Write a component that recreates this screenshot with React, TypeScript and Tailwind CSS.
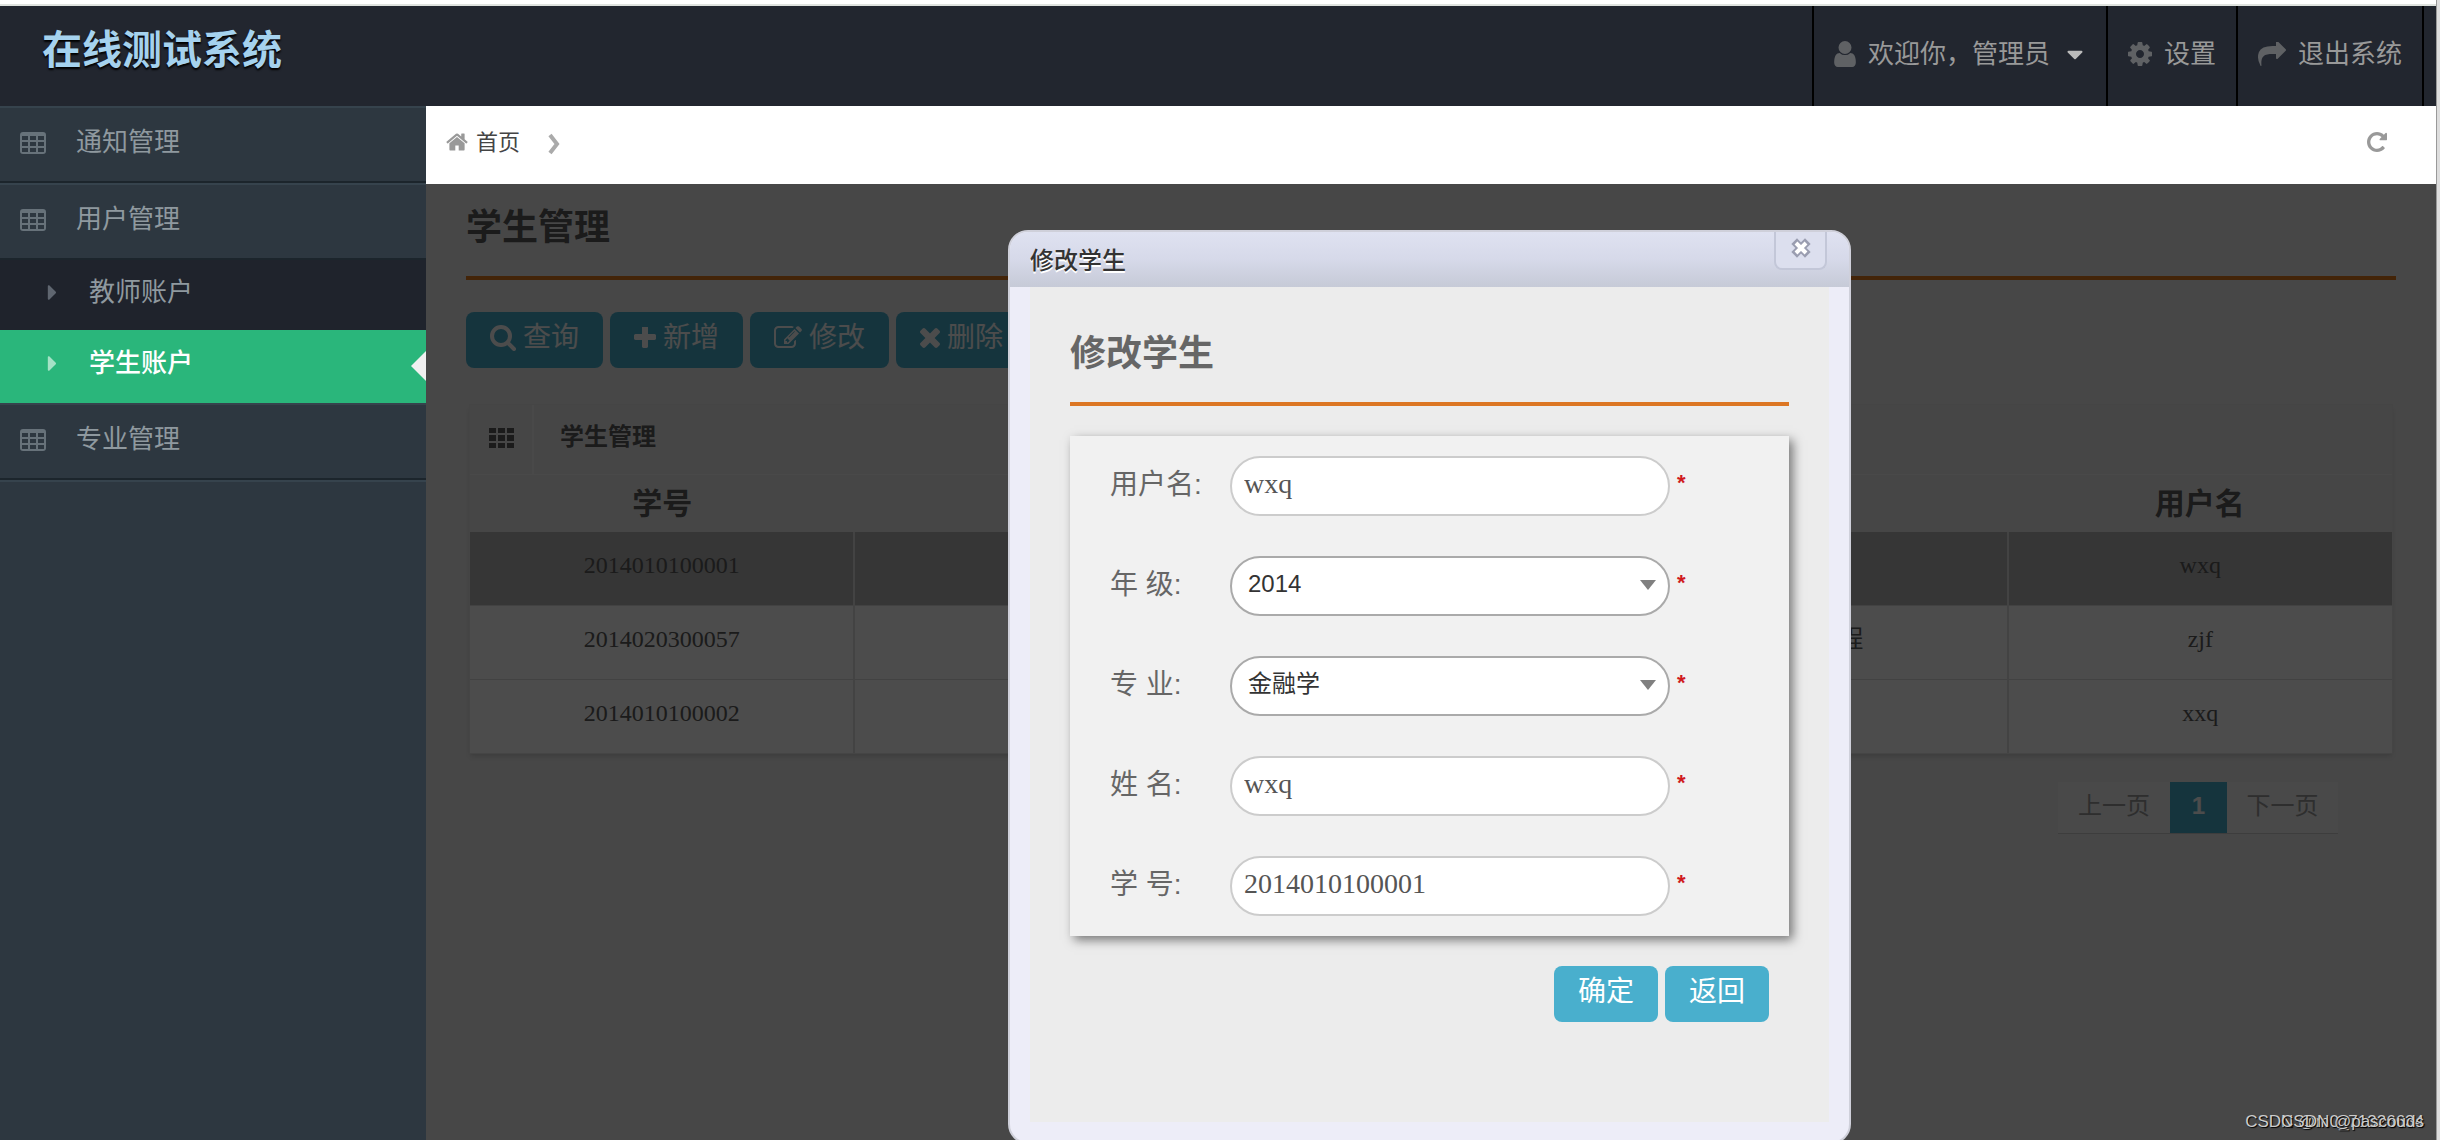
import React from 'react';
import { FaCaretRight, FaCaretDown } from 'react-icons/fa';

type IconProps = { className?: string };

const UserIcon = ({ className }: IconProps) => (
  <svg viewBox="256 128 1280 1536" fill="currentColor" className={className}>
    <path d="M1536 1399q0 109-62.5 187t-150.5 78h-854q-88 0-150.5-78t-62.5-187q0-85 8.5-160.5t31.5-152 58.5-131 94-89 134.5-34.5q131 128 313 128t313-128q76 0 134.5 34.5t94 89 58.5 131 31.5 152 8.5 160.5zm-256-887q0 159-112.5 271.5t-271.5 112.5-271.5-112.5-112.5-271.5 112.5-271.5 271.5-112.5 271.5 112.5 112.5 271.5z" />
  </svg>
);

const CogIcon = ({ className }: IconProps) => (
  <svg viewBox="128 128 1536 1536" fill="currentColor" className={className}>
    <path d="M1152 896q0-106-75-181t-181-75-181 75-75 181 75 181 181 75 181-75 75-181zm512-109v222q0 12-8 23t-20 13l-185 28q-19 54-39 91 35 50 107 138 10 12 10 25t-9 23q-27 37-99 108t-94 71q-12 0-26-9l-138-108q-44 23-91 38-16 136-29 186-7 28-36 28h-222q-14 0-24.5-8.5t-11.5-21.5l-28-184q-49-16-90-37l-141 107q-10 9-25 9-14 0-25-11-126-114-165-168-7-10-7-23 0-12 8-23 15-21 51-66.5t54-70.5q-27-50-41-99l-183-27q-13-2-21-12.5t-8-23.5v-222q0-12 8-23t19-13l186-28q14-46 39-92-40-57-107-138-10-12-10-24 0-10 9-23 26-36 98.5-107.5t94.5-71.5q13 0 26 10l138 107q44-23 91-38 16-136 29-186 7-28 36-28h222q14 0 24.5 8.5t11.5 21.5l28 184q49 16 90 37l142-107q9-9 24-9 13 0 25 10 129 119 165 170 7 8 7 22 0 12-8 23-15 21-51 66.5t-54 70.5q26 50 41 98l183 28q13 2 21 12.5t8 23.5z" />
  </svg>
);

const ShareIcon = ({ className }: IconProps) => (
  <svg viewBox="0 128 1792 1536" fill="currentColor" className={className}>
    <path d="M1792 640q0 26-19 45l-512 512q-19 19-45 19t-45-19-19-45v-256h-224q-98 0-175.5 6t-154 21.5-133 42.5-105.5 69.5-80 101-48.5 138.5-17.5 181q0 55 5 123 0 6 2.5 23.5t2.5 26.5q0 15-8.5 25t-23.5 10q-16 0-28-17-7-9-13-22t-13.5-30-10.5-24q-127-285-127-451 0-199 53-333 162-403 875-403h224v-256q0-26 19-45t45-19 45 19l512 512q19 19 19 45z" />
  </svg>
);

const HomeIcon = ({ className }: IconProps) => (
  <svg viewBox="64 256 1664 1280" fill="currentColor" className={className}>
    <path d="M1472 992v480q0 26-19 45t-45 19h-384v-384h-256v384h-384q-26 0-45-19t-19-45v-480q0-1 .5-3t.5-3l575-474 575 474q1 2 1 6zm223-69l-62 74q-8 9-21 11h-3q-13 0-21-7l-692-577-692 577q-12 8-24 7-13-2-21-11l-62-74q-8-10-7-23.5t11-21.5l719-599q32-26 76-26t76 26l244 204v-195q0-14 9-23t23-9h192q14 0 23 9t9 23v408l219 182q10 8 11 21.5t-7 23.5z" />
  </svg>
);

const RepeatIcon = ({ className }: IconProps) => (
  <svg viewBox="128 128 1536 1536" fill="currentColor" className={className}>
    <path d="M1664 256v448q0 26-19 45t-45 19h-448q-42 0-59-40-17-39 14-69l138-138q-148-137-349-137-104 0-198.5 40.5t-163.5 109.5-109.5 163.5-40.5 198.5 40.5 198.5 109.5 163.5 163.5 109.5 198.5 40.5q119 0 225-52t179-147q7-10 23-12 15 0 25 9l137 138q9 8 9.5 20.5t-7.5 22.5q-109 132-264 204.5t-327 72.5q-156 0-298-61t-245-164-164-245-61-298 61-298 164-245 245-164 298-61q147 0 284.5 55.5t244.5 156.5l130-129q29-31 70-14 39 17 39 59z" />
  </svg>
);

const TableIcon = ({ className }: IconProps) => (
  <svg viewBox="0 0 26 22" fill="currentColor" className={className}>
    <path fillRule="evenodd" d="M3 0h20q3 0 3 3v16q0 3-3 3H3q-3 0-3-3V3q0-3 3-3zM2 4v4h6V4zM10 4v4h6V4zM18 4v4h6V4zM2 10v4h6v-4zM10 10v4h6v-4zM18 10v4h6v-4zM2 16v4h6v-4zM10 16v4h6v-4zM18 16v4h6v-4z" />
  </svg>
);

const GridIcon = ({ className }: IconProps) => (
  <svg viewBox="0 0 25 20" fill="currentColor" className={className}>
    <path d="M0 0h7v5H0zM9 0h7v5H9zM18 0h7v5h-7zM0 7h7v6H0zM9 7h7v6H9zM18 7h7v6h-7zM0 15h7v5H0zM9 15h7v5H9zM18 15h7v5h-7z" />
  </svg>
);

const SearchIcon = ({ className }: IconProps) => (
  <svg viewBox="0 0 26 26" fill="none" stroke="currentColor" strokeWidth="4" strokeLinecap="round" className={className}>
    <circle cx="11" cy="11" r="9" />
    <path d="M18 18l6 6" />
  </svg>
);

const PlusIcon = ({ className }: IconProps) => (
  <svg viewBox="192 192 1408 1408" fill="currentColor" className={className}>
    <path d="M1600 736v192q0 40-28 68t-68 28h-416v416q0 40-28 68t-68 28h-192q-40 0-68-28t-28-68v-416h-416q-40 0-68-28t-28-68v-192q0-40 28-68t68-28h416v-416q0-40 28-68t68-28h192q40 0 68 28t28 68v416h416q40 0 68 28t28 68z" />
  </svg>
);

const EditIcon = ({ className }: IconProps) => (
  <svg viewBox="0 128 1792 1536" fill="currentColor" className={className}>
    <path d="M888 1184l116-116-152-152-116 116v56h96v96h56zm440-720q-16-16-33 1l-350 350q-17 17-1 33t33-1l350-350q17-17 1-33zm80 594v190q0 119-84.5 203.5t-203.5 84.5h-832q-119 0-203.5-84.5t-84.5-203.5v-832q0-119 84.5-203.5t203.5-84.5h832q63 0 117 25 15 7 18 23 3 17-9 29l-49 49q-14 14-32 8-23-6-45-6h-832q-66 0-113 47t-47 113v832q0 66 47 113t113 47h832q66 0 113-47t47-113v-126q0-13 9-22l64-64q15-15 35-7t20 29zm-96-738l288 288-672 672h-288v-288zm444 132l-92 92-288-288 92-92q28-28 68-28t68 28l152 152q28 28 28 68t-28 68z" />
  </svg>
);

const TimesIcon = ({ className }: IconProps) => (
  <svg viewBox="302 366 1188 1188" fill="currentColor" className={className}>
    <path d="M1490 1322q0 40-28 68l-136 136q-28 28-68 28t-68-28l-294-294-294 294q-28 28-68 28t-68-28l-136-136q-28-28-28-68t28-68l294-294-294-294q-28-28-28-68t28-68l136-136q28-28 68-28t68 28l294 294 294-294q28-28 68-28t68 28l136 136q28 28 28 68t-28 68l-294 294 294 294q28 28 28 68z" />
  </svg>
);

const students = [
  { no: '2014010100001', grade: '2014', name: 'wxq', major: '金融学', user: 'wxq', selected: true },
  { no: '2014020300057', grade: '2014', name: 'zjf', major: '软件工程', user: 'zjf', selected: false },
  { no: '2014010100002', grade: '2014', name: 'xxq', major: '金融学', user: 'xxq', selected: false },
];

const toolbar = [
  { label: '查询', icon: <SearchIcon className="size-[26px]" /> },
  { label: '新增', icon: <PlusIcon className="size-[22px]" /> },
  { label: '修改', icon: <EditIcon className="h-6 w-7" /> },
  { label: '删除', icon: <TimesIcon className="size-[20px]" /> },
];

const fields = [
  { id: 'username', label: '用户名:', value: 'wxq' },
  { id: 'grade', label: '年 级:', value: '2014', options: ['2014', '2013'] },
  { id: 'major', label: '专 业:', value: '金融学', options: ['金融学', '软件工程'] },
  { id: 'name', label: '姓 名:', value: 'wxq' },
  { id: 'number', label: '学 号:', value: '2014010100001' },
];

const Header = () => (
  <header className="flex h-[100px] shrink-0 justify-between bg-[#22262f]">
    <h1 className="pl-[42px] text-[40px] leading-[88px] font-bold text-[#a5d2ee] [text-shadow:0_2px_2px_#000]">在线测试系统</h1>
    <nav className="flex pr-3 text-[26px] text-[#999]">
      <a href="#user" className="flex w-[294px] items-center border-l-2 border-black pb-1 pl-5">
        <UserIcon className="mr-3 h-[26px] w-[22px] text-[#5f6164]" />
        欢迎你，管理员
        <FaCaretDown className="ml-3 size-[26px] text-[#bbb]" />
      </a>
      <a href="#settings" className="flex w-[130px] items-center border-l-2 border-black pb-1 pl-5">
        <CogIcon className="mr-3 size-6 text-[#5f6164]" />
        设置
      </a>
      <a href="#logout" className="flex w-[188px] items-center border-x-2 border-black pb-1 pl-5">
        <ShareIcon className="mr-3 h-6 w-7 text-[#5f6164]" />
        退出系统
      </a>
    </nav>
  </header>
);

const MenuItem = ({ label }: { label: string }) => (
  <a href="#menu" className="flex h-[77px] items-center border-t-2 border-b-2 border-t-[#36434d] border-b-[#1c252c] pb-1 pl-5 text-[26px] text-[#8f999f]">
    <TableIcon className="mr-[30px] h-[22px] w-[26px] text-[#67727a]" />
    {label}
  </a>
);

const Sidebar = () => (
  <aside className="w-[426px] shrink-0 bg-[#2d3740]">
    <MenuItem label="通知管理" />
    <MenuItem label="用户管理" />
    <a href="#teachers" className="flex h-[70px] items-center bg-[#1f232c] pb-1.5 pl-[40px] text-[26px] text-[#8f999f]">
      <FaCaretRight className="mr-6 size-[25px] text-[#5f6670]" />
      教师账户
    </a>
    <a href="#students" className="relative flex h-[73px] items-center bg-[#2ab67b] pb-1.5 pl-[40px] text-[26px] font-medium text-white">
      <FaCaretRight className="mr-6 size-[25px] text-[#a5e2c6]" />
      学生账户
      <svg viewBox="0 0 15 30" className="absolute top-[21px] right-0 h-[30px] w-[15px]">
        <path d="M15 0v30L0 15z" fill="#f0f0f0" />
      </svg>
    </a>
    <MenuItem label="专业管理" />
    <div className="h-[2px] bg-[#36434d]" />
  </aside>
);

const Breadcrumb = () => (
  <div className="flex h-[78px] shrink-0 items-center justify-between bg-white pr-[49px] pb-1.5 pl-5 text-[#999]">
    <div className="flex items-center">
      <HomeIcon className="mr-2 h-[18px] w-[22px]" />
      <a href="#home" className="text-[22px] text-[#444]">首页</a>
      <svg viewBox="0 0 12 22" className="mt-1 ml-7 h-[22px] w-3" fill="none" stroke="#aaa" strokeWidth="4">
        <path d="M2 2l7 9-7 9" />
      </svg>
    </div>
    <button type="button" aria-label="刷新">
      <RepeatIcon className="size-[20px]" />
    </button>
  </div>
);

const StudentList = () => (
  <main className="px-10 text-[#5a5a5a]">
    <h2 className="h-24 border-b-4 border-[#e07a1c] text-[36px] leading-[88px] font-bold">学生管理</h2>
    <div className="mt-8 flex gap-[7px]">
      {toolbar.map(({ label, icon }) => (
        <button key={label} type="button" className="flex h-14 items-center gap-[7px] rounded-lg bg-[#49afcd] px-6 pb-1 text-[28px] text-white">
          {icon}
          {label}
        </button>
      ))}
    </div>
    <section className="mt-9 mr-[3px] ml-[3px] border border-[#e6e6e6] shadow-md">
      <div className="flex h-[70px] items-center border-b border-[#f4f4f4] bg-[#ebebeb] text-2xl font-bold">
        <span className="flex h-full w-[64px] items-center justify-center border-r-2 border-[#f6f6f6] pb-1">
          <GridIcon className="h-[20px] w-[25px]" />
        </span>
        <h3 className="pb-1.5 pl-[26px]">学生管理</h3>
      </div>
      <table className="w-full table-fixed border-collapse text-center">
        <thead>
          <tr className="h-[57px] bg-[#ececec] text-[30px] leading-9">
            <th>学号</th>
            <th>年级</th>
            <th>姓名</th>
            <th>专业</th>
            <th>用户名</th>
          </tr>
        </thead>
        <tbody className="font-['Liberation_Serif','Noto_Sans_CJK_SC',serif] text-2xl">
          {students.map((s) => (
            <tr key={s.no} className={s.selected ? 'h-[73px] bg-[#b4b4b4]' : 'h-[74px] border-t border-[#ddd] bg-[#fdfdfd]'}>
              <td className="border-r-2 border-[#e2e2e2] pb-1.5">{s.no}</td>
              <td className="border-r-2 border-[#e2e2e2] pb-1.5">{s.grade}</td>
              <td className="border-r-2 border-[#e2e2e2] pb-1.5">{s.name}</td>
              <td className="border-r-2 border-[#e2e2e2] pb-1.5">{s.major}</td>
              <td className="pb-1.5">{s.user}</td>
            </tr>
          ))}
        </tbody>
      </table>
    </section>
    <div className="mt-7 mr-[58px] flex justify-end text-2xl">
      <div className="flex h-[52px] border-b border-[#ccc] bg-[#f4f4f4]">
        <button type="button" className="w-[112px] pb-1 text-[#999]">上一页</button>
        <button type="button" className="w-[57px] bg-[#49afcd] pb-1 font-bold text-white">1</button>
        <button type="button" className="w-[111px] pb-1 text-[#999]">下一页</button>
      </div>
    </div>
  </main>
);

const Field = ({ id, label, value, options }: { id: string; label: string; value: string; options?: string[] }) => (
  <div className="flex h-[60px]">
    <label htmlFor={id} className="w-[120px] text-[28px] leading-[58px] text-[#666]">{label}</label>
    {options ? (
      <div className="relative w-[440px]">
        <select id={id} defaultValue={value} className="h-full w-full appearance-none rounded-full border-2 border-[#aaa] bg-white pb-1 pl-4 text-2xl text-[#333]">
          {options.map((o) => <option key={o}>{o}</option>)}
        </select>
        <svg viewBox="0 0 16 10" className="pointer-events-none absolute top-6 right-3.5 h-[10px] w-[16px]">
          <path d="M0 0h16L8 10z" fill="#808080" />
        </svg>
      </div>
    ) : (
      <input id={id} defaultValue={value} className="w-[440px] rounded-full border-2 border-[#ccc] bg-white pb-1 pl-3 font-['Liberation_Serif',serif] text-[28px] text-[#555]" />
    )}
    <span className="pl-[7px] text-[22px] leading-[54px] font-bold text-[#d01a1e]">*</span>
  </div>
);

const EditDialog = () => (
  <div role="dialog" aria-label="修改学生" className="mt-[46px] flex h-[914px] w-[843px] shrink-0 flex-col overflow-hidden rounded-[20px] border-2 border-[#cfd0da] bg-[#ededf8]">
    <div className="flex h-[55px] shrink-0 justify-between bg-linear-to-b from-[#dfe2f1] via-[#d6d9e9] to-[#c6cad7] pr-[22px] pl-5">
      <span className="text-2xl leading-[58px] font-medium text-[#333] [text-shadow:0_2px_0_#fff]">修改学生</span>
      <button type="button" aria-label="关闭" className="flex h-[38px] w-[53px] items-center justify-center rounded-b-lg border-2 border-t-0 border-[#c3c7d8] bg-[#dcdfee] pb-1">
        <svg viewBox="0 0 20 20" className="size-5">
          <path d="M6 6l8 8M14 6l-8 8" stroke="#9a9db0" strokeWidth="8" strokeLinecap="square" />
          <path d="M5 5l10 10M15 5L5 15" stroke="#fff" strokeWidth="4" />
        </svg>
      </button>
    </div>
    <form className="mx-5 mb-5 flex-1 bg-[#ececec] px-10">
      <h2 className="h-[119px] border-b-4 border-[#dc7623] pt-[26px] text-[36px] leading-[82px] font-bold text-[#666]">修改学生</h2>
      <div className="mt-[30px] flex flex-col gap-10 bg-[#f1f1f1] px-10 py-5 shadow-[4px_4px_10px_#777]">
        {fields.map((f) => <Field key={f.id} {...f} />)}
      </div>
      <div className="mt-[30px] flex justify-end gap-[7px] pr-5 text-[28px] text-white">
        <button type="button" className="h-14 rounded-lg bg-[#49afcd] px-6 pb-1">确定</button>
        <button type="button" className="h-14 rounded-lg bg-[#49afcd] px-6 pb-1">返回</button>
      </div>
    </form>
  </div>
);

const App = () => (
  <div className="relative flex h-screen overflow-hidden font-['Liberation_Sans','Noto_Sans_CJK_SC',sans-serif]">
    <div className="flex min-w-0 flex-1 flex-col">
      <div className="h-1.5 shrink-0 border-b-2 border-[#dfe3df] bg-white" />
      <Header />
      <div className="flex min-h-0 flex-1">
        <Sidebar />
        <div className="flex min-w-0 flex-1 flex-col">
          <Breadcrumb />
          <div className="relative min-h-0 flex-1 overflow-hidden bg-[#eee]">
            <StudentList />
            <div className="absolute inset-0 flex items-start justify-center bg-black/70 pr-[3px]">
              <EditDialog />
            </div>
          </div>
        </div>
      </div>
    </div>
    <div className="w-1 shrink-0 border-l border-[#999] bg-[#ddd]" />
    <div className="absolute right-4 bottom-1.5 grid justify-items-end text-[17px] leading-6 text-[#ccc] [text-shadow:1px_1px_1px_#000]">
      <span className="col-start-1 row-start-1">CSDN @m0_71326634</span>
      <span className="col-start-1 row-start-1">CSDN @pascouds</span>
    </div>
  </div>
);

export default App;
